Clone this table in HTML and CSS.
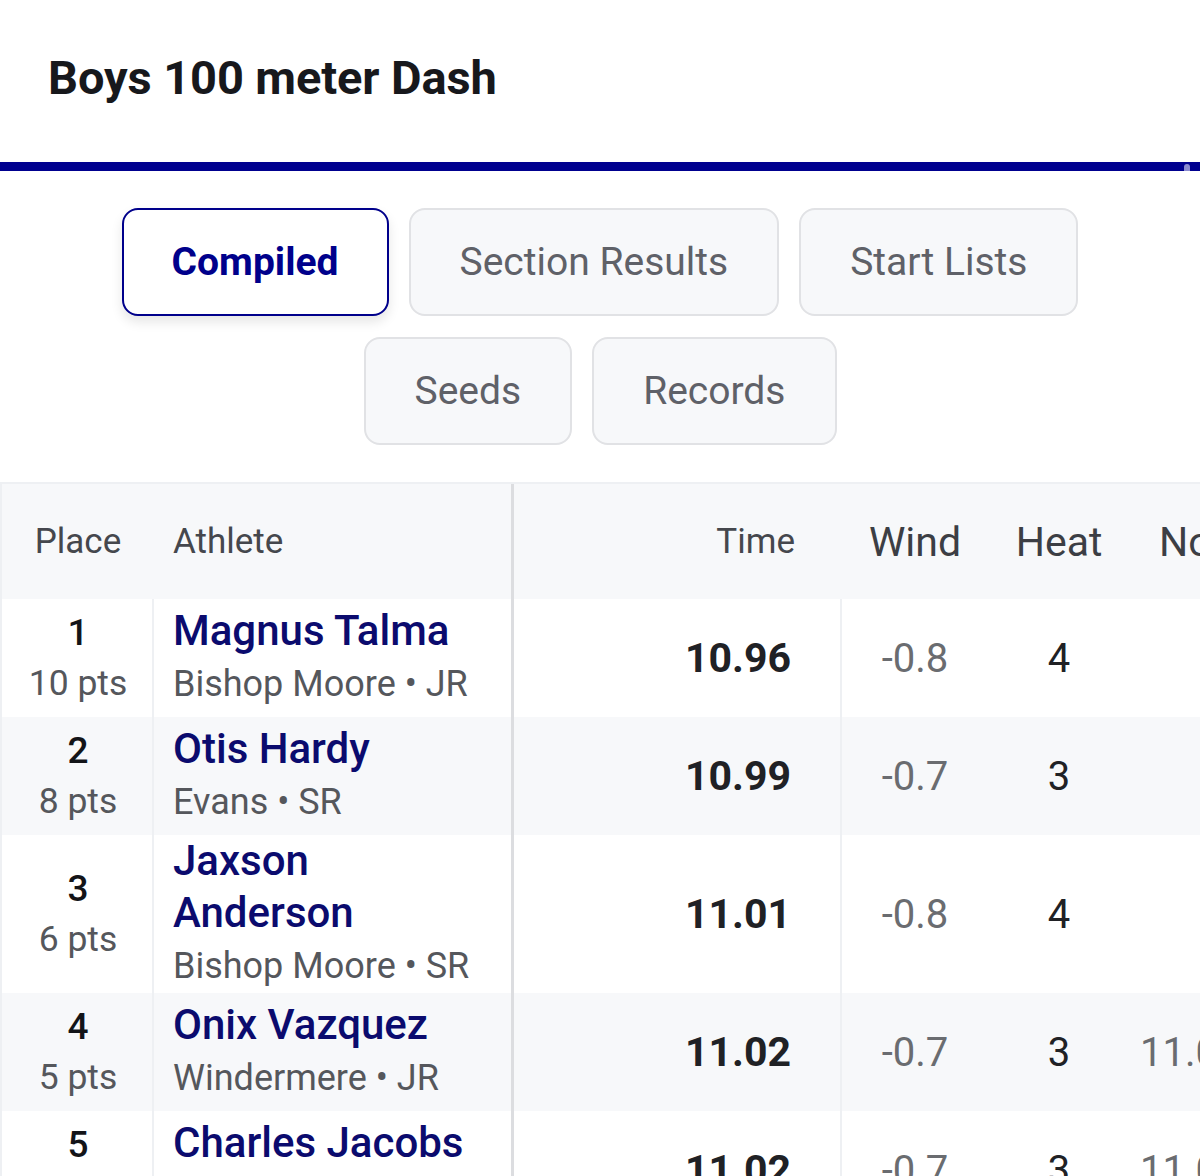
FILE: index.html
```html
<!DOCTYPE html>
<html lang="en">
<head>
<meta charset="utf-8">
<title>Boys 100 meter Dash</title>
<link rel="stylesheet" href="styles.css">
</head>
<body>
<header class="title-bar">
  <h1 class="title">Boys 100 meter Dash</h1>
</header>
<div class="accent"><span class="accent-thumb"></span></div>

<nav class="tabs">
  <button class="tab tab-active">Compiled</button>
  <button class="tab">Section Results</button>
  <button class="tab">Start Lists</button>
  <button class="tab">Seeds</button>
  <button class="tab">Records</button>
</nav>

<div class="table-wrap">
  <table class="results">
    <colgroup>
      <col class="c-place">
      <col class="c-athlete">
      <col class="c-time">
      <col class="c-wind">
      <col class="c-heat">
      <col class="c-notes">
    </colgroup>
    <thead>
      <tr>
        <th class="h-place">Place</th>
        <th class="h-athlete">Athlete</th>
        <th class="h-time">Time</th>
        <th class="h-big h-wind">Wind</th>
        <th class="h-big h-heat">Heat</th>
        <th class="h-big h-notes">Notes</th>
      </tr>
    </thead>
    <tbody>
      <tr>
        <td class="place"><div class="pl">1</div><div class="pts">10 pts</div></td>
        <td class="athlete"><div class="name">Magnus Talma</div><div class="school">Bishop Moore • JR</div></td>
        <td class="time">10.96</td>
        <td class="wind">-0.8</td>
        <td class="heat">4</td>
        <td class="notes"></td>
      </tr>
      <tr>
        <td class="place"><div class="pl">2</div><div class="pts">8 pts</div></td>
        <td class="athlete"><div class="name">Otis Hardy</div><div class="school">Evans • SR</div></td>
        <td class="time">10.99</td>
        <td class="wind">-0.7</td>
        <td class="heat">3</td>
        <td class="notes"></td>
      </tr>
      <tr>
        <td class="place"><div class="pl">3</div><div class="pts">6 pts</div></td>
        <td class="athlete"><div class="name">Jaxson Anderson</div><div class="school">Bishop Moore • SR</div></td>
        <td class="time">11.01</td>
        <td class="wind">-0.8</td>
        <td class="heat">4</td>
        <td class="notes"></td>
      </tr>
      <tr>
        <td class="place"><div class="pl">4</div><div class="pts">5 pts</div></td>
        <td class="athlete"><div class="name">Onix Vazquez</div><div class="school">Windermere • JR</div></td>
        <td class="time">11.02</td>
        <td class="wind">-0.7</td>
        <td class="heat">3</td>
        <td class="notes">11.020</td>
      </tr>
      <tr>
        <td class="place"><div class="pl">5</div><div class="pts">4 pts</div></td>
        <td class="athlete"><div class="name">Charles Jacobs</div><div class="school">Windermere • SR</div></td>
        <td class="time">11.02</td>
        <td class="wind">-0.7</td>
        <td class="heat">3</td>
        <td class="notes">11.022</td>
      </tr>
    </tbody>
  </table>
</div>
</body>
</html>
```

FILE: styles.css
```css
* { box-sizing: border-box; }

html, body {
  margin: 0;
  padding: 0;
  background: #ffffff;
  font-family: Roboto, "Liberation Sans", Arial, sans-serif;
  overflow: hidden;
}

.title-bar {
  height: 162px;
  padding: 51px 0 0 48px;
}

.title {
  margin: 0;
  font-size: 47px;
  line-height: 54px;
  font-weight: 700;
  color: #17181c;
  letter-spacing: -0.1px;
}

.accent {
  position: relative;
  height: 9px;
  background: #00008f;
}

.accent-thumb {
  position: absolute;
  right: 10px;
  top: 2px;
  width: 6px;
  height: 7px;
  border-radius: 3px 3px 0 0;
  background: #8a8ad0;
}

.tabs {
  display: flex;
  flex-wrap: wrap;
  justify-content: center;
  gap: 21px 20px;
  max-width: 1100px;
  margin: 0 auto;
  padding: 37px 0 37px;
}

.tab {
  height: 108px;
  padding: 0 49px;
  border: 2px solid #e1e2e5;
  border-radius: 16px;
  background: #f7f8fa;
  color: #5f6168;
  font-family: Roboto, "Liberation Sans", Arial, sans-serif;
  font-size: 39px;
  font-weight: 400;
}

.tab-active {
  border-color: #00008b;
  background: #ffffff;
  color: #00008b;
  font-weight: 700;
  padding: 0 48px;
  box-shadow: 0 6px 12px rgba(0, 0, 0, 0.10);
}

.table-wrap {
  overflow: hidden;
  border-top: 2px solid #eef0f3;
  border-left: 2px solid #eef0f3;
}

.results {
  table-layout: fixed;
  width: 1300px;
  border-collapse: separate;
  border-spacing: 0;
}

.c-place { width: 152px; }
.c-athlete { width: 360px; }
.c-time { width: 328px; }
.c-wind { width: 146px; }
.c-heat { width: 142px; }
.c-notes { width: 172px; }

thead th {
  height: 115px;
  background: #f7f8fa;
  color: #45474d;
  font-weight: 400;
  font-size: 35px;
  padding: 0;
}

.h-place { text-align: center; }
.h-athlete {
  text-align: left;
  padding-left: 19px;
  border-right: 3px solid #dcdde0;
}
.h-time { text-align: right; padding-right: 47px; }
.h-big { font-size: 41px; color: #3c3e44; }
.h-wind, .h-heat { text-align: center; }
.h-notes { text-align: left; padding-left: 29px; }

tbody td {
  height: 118px;
  padding: 0;
  vertical-align: middle;
}

tbody tr:nth-child(even) td { background: #f7f8fa; }

.place {
  text-align: center;
  padding-left: 2px;
  border-right: 2px solid #eef0f3;
}

.pl {
  font-size: 37px;
  line-height: 50px;
  font-weight: 500;
  color: #131418;
}

.pts {
  font-size: 35.5px;
  line-height: 50px;
  color: #55575c;
}

.athlete {
  padding-left: 19px;
  padding-right: 30px;
  border-right: 3px solid #dcdde0;
}

.name {
  font-size: 42px;
  line-height: 52px;
  font-weight: 500;
  color: #0b0b6e;
}

.school {
  font-size: 36px;
  line-height: 54px;
  color: #55575c;
}

.time {
  text-align: right;
  padding-right: 49px;
  font-size: 41px;
  font-weight: 700;
  color: #202125;
  border-right: 2px solid #eef0f3;
}

.wind {
  text-align: center;
  font-size: 40px;
  color: #6a6c70;
}

.heat {
  text-align: center;
  font-size: 40px;
  color: #202125;
}

.notes {
  text-align: left;
  padding-left: 10px;
  font-size: 40px;
  color: #6a6c70;
  white-space: nowrap;
}
```
